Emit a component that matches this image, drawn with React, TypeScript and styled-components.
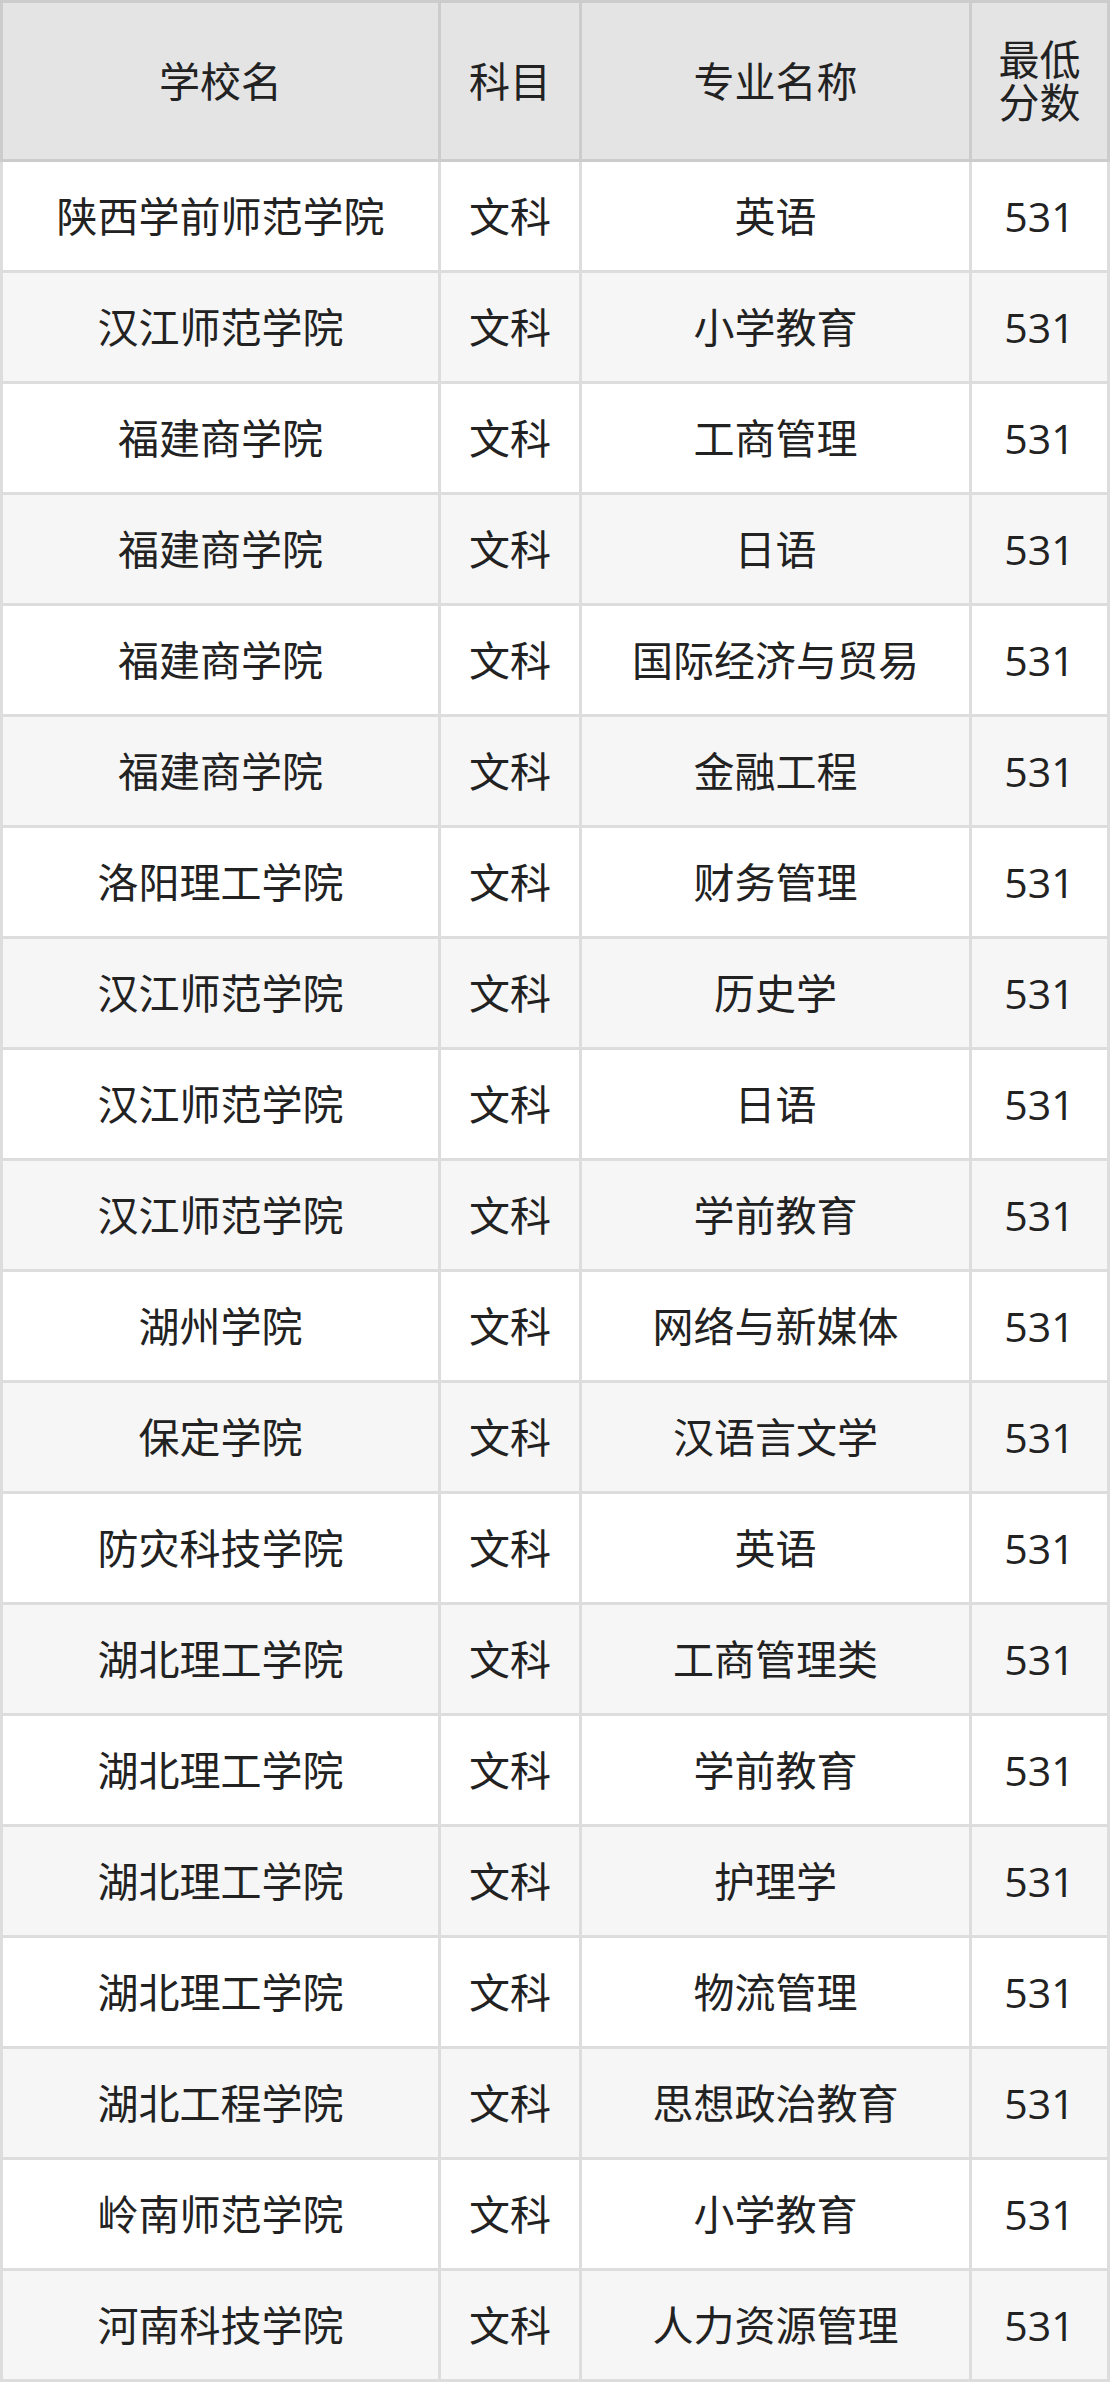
import React from "react";
import styled, { createGlobalStyle } from "styled-components";

const GlobalStyle = createGlobalStyle`
  html, body {
    margin: 0;
    padding: 0;
    background: #ffffff;
  }
  body {
    font-family: "Open Sans", "Noto Sans CJK SC", sans-serif;
    color: #222222;
  }
  * { box-sizing: border-box; }
`;

const Table = styled.div`
  width: 1110px;
  display: flex;
  flex-direction: column;
`;

const Row = styled.div<{ $striped?: boolean }>`
  display: grid;
  grid-template-columns: 438px 141px 390px 141px;
  background: ${(p) => (p.$striped ? "#f6f6f6" : "#ffffff")};
`;

const HeaderRow = styled(Row)`
  background: #e4e4e4;
`;

const Cell = styled.div<{ $last?: boolean }>`
  height: 111px;
  border-left: 3px solid #dddddd;
  border-bottom: 3px solid #dddddd;
  border-right: ${(p) => (p.$last ? "3px solid #dddddd" : "none")};
  display: flex;
  align-items: center;
  justify-content: center;
  text-align: center;
  font-size: 41px;
  line-height: 43px;
  padding: 0 6px;
`;

const HeadCell = styled(Cell)`
  height: 162px;
  border-top: 3px solid #cccccc;
  border-left-color: #cccccc;
  border-bottom-color: #cccccc;
  border-right: ${(p) => (p.$last ? "3px solid #cccccc" : "none")};
  padding: 0 20px;
`;

const rows: [string, string][] = [
  ["陕西学前师范学院", "英语"],
  ["汉江师范学院", "小学教育"],
  ["福建商学院", "工商管理"],
  ["福建商学院", "日语"],
  ["福建商学院", "国际经济与贸易"],
  ["福建商学院", "金融工程"],
  ["洛阳理工学院", "财务管理"],
  ["汉江师范学院", "历史学"],
  ["汉江师范学院", "日语"],
  ["汉江师范学院", "学前教育"],
  ["湖州学院", "网络与新媒体"],
  ["保定学院", "汉语言文学"],
  ["防灾科技学院", "英语"],
  ["湖北理工学院", "工商管理类"],
  ["湖北理工学院", "学前教育"],
  ["湖北理工学院", "护理学"],
  ["湖北理工学院", "物流管理"],
  ["湖北工程学院", "思想政治教育"],
  ["岭南师范学院", "小学教育"],
  ["河南科技学院", "人力资源管理"],
];

export default function App() {
  return (
    <>
      <GlobalStyle />
      <Table>
        <HeaderRow>
          <HeadCell>学校名</HeadCell>
          <HeadCell>科目</HeadCell>
          <HeadCell>专业名称</HeadCell>
          <HeadCell $last>最低分数</HeadCell>
        </HeaderRow>
        {rows.map(([school, major], i) => (
          <Row key={i} $striped={i % 2 === 1}>
            <Cell>{school}</Cell>
            <Cell>文科</Cell>
            <Cell>{major}</Cell>
            <Cell $last>531</Cell>
          </Row>
        ))}
      </Table>
    </>
  );
}
